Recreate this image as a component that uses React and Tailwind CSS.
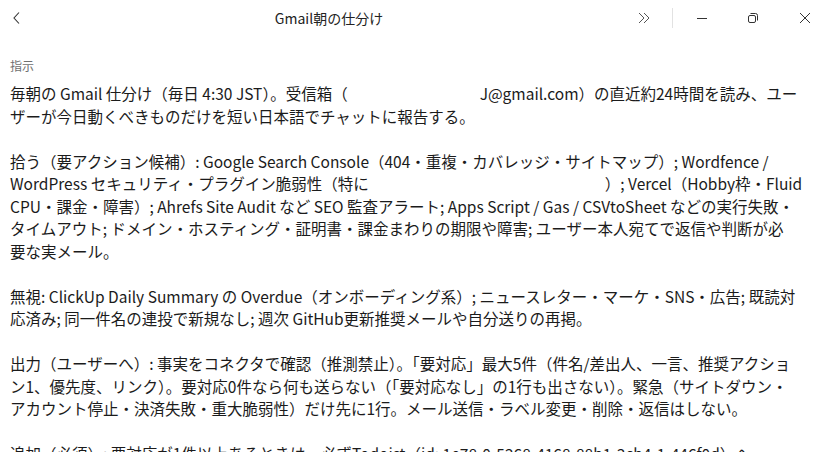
import React from "react";

const font = { fontFamily: '"Noto Sans CJK JP", "Noto Sans", sans-serif' };

function Gap({ w }) {
  return <span className="inline-block" style={{ width: w }} />;
}

const paragraphs = [
  [
    <>毎朝の Gmail 仕分け（毎日 4:30 JST）。受信箱（<Gap w={132} />J@gmail.com）の直近約24時間を読み、ユー</>,
    <>ザーが今日動くべきものだけを短い日本語でチャットに報告する。</>,
  ],
  [
    <>拾う（要アクション候補）: Google Search Console（404・重複・カバレッジ・サイトマップ）; Wordfence /</>,
    <>WordPress セキュリティ・プラグイン脆弱性（特に<Gap w={236} />）; Vercel（Hobby枠・Fluid</>,
    <>CPU・課金・障害）; Ahrefs Site Audit など SEO 監査アラート; Apps Script / Gas / CSVtoSheet などの実行失敗・</>,
    <>タイムアウト; ドメイン・ホスティング・証明書・課金まわりの期限や障害; ユーザー本人宛てで返信や判断が必</>,
    <>要な実メール。</>,
  ],
  [
    <>無視: ClickUp Daily Summary の Overdue（オンボーディング系）; ニュースレター・マーケ・SNS・広告; 既読対</>,
    <>応済み; 同一件名の連投で新規なし; 週次 GitHub更新推奨メールや自分送りの再掲。</>,
  ],
  [
    <>出力（ユーザーへ）: 事実をコネクタで確認（推測禁止）。「要対応」最大5件（件名/差出人、一言、推奨アクショ</>,
    <>ン1、優先度、リンク）。要対応0件なら何も送らない（「要対応なし」の1行も出さない）。緊急（サイトダウン・</>,
    <>アカウント停止・決済失敗・重大脆弱性）だけ先に1行。メール送信・ラベル変更・削除・返信はしない。</>,
  ],
  [
    <>追加（必須）: 要対応が1件以上あるときは、必ずTodoist（id: 1e78-0-5268-4168-88b1-3cb4-1-446f0d）へ</>,
  ],
];

export default function App() {
  return (
    <div className="w-[816px] h-[452px] overflow-hidden bg-white text-[#1b1b1b]" style={font}>
      <div className="h-[36px] flex items-center">
        <button className="w-[34px] h-[36px] flex items-center justify-center">
          <svg width="10" height="14" viewBox="0 0 10 14" fill="none" stroke="#333" strokeWidth="1.1">
            <path d="M7 1.5 L2 7 L7 12.5" />
          </svg>
        </button>
        <div className="flex-1 text-center text-[14px] pr-[4px] text-[#222]">Gmail朝の仕分け</div>
        <div className="flex items-center h-[36px]">
          <div className="w-[32px] flex justify-center">
            <svg width="16" height="14" viewBox="0 0 16 14" fill="none" stroke="#555" strokeWidth="1">
              <path d="M3 2 L8 7 L3 12" />
              <path d="M8 2 L13 7 L8 12" />
            </svg>
          </div>
          <div className="w-px h-[20px] bg-[#e2e2e2] ml-[12px] mr-[4px]" />
          <div className="w-[50px] flex justify-center">
            <svg width="12" height="12" viewBox="0 0 12 12" stroke="#333" strokeWidth="1">
              <path d="M1 6.5 H11" />
            </svg>
          </div>
          <div className="w-[52px] flex justify-center">
            <svg width="12" height="12" viewBox="0 0 12 12" fill="none" stroke="#333" strokeWidth="1">
              <rect x="1.5" y="3.5" width="7" height="7" rx="1.5" />
              <path d="M3.5 1.5 H8.5 A2 2 0 0 1 10.5 3.5 V8.5" />
            </svg>
          </div>
          <div className="w-[37px] flex justify-end pr-[5px]">
            <svg width="12" height="12" viewBox="0 0 12 12" stroke="#333" strokeWidth="1">
              <path d="M1 1 L11 11 M11 1 L1 11" />
            </svg>
          </div>
        </div>
      </div>

      <div className="px-[10px] pt-[22px]">
        <div className="text-[12px] leading-[16px] text-[#707070] mb-[8px]">指示</div>
        {paragraphs.map((lines, i) => (
          <div key={i} className="mb-[22.5px]">
            {lines.map((l, j) => (
              <div key={j} className="whitespace-nowrap text-[15.5px] leading-[22.5px]">
                {l}
              </div>
            ))}
          </div>
        ))}
      </div>
    </div>
  );
}
